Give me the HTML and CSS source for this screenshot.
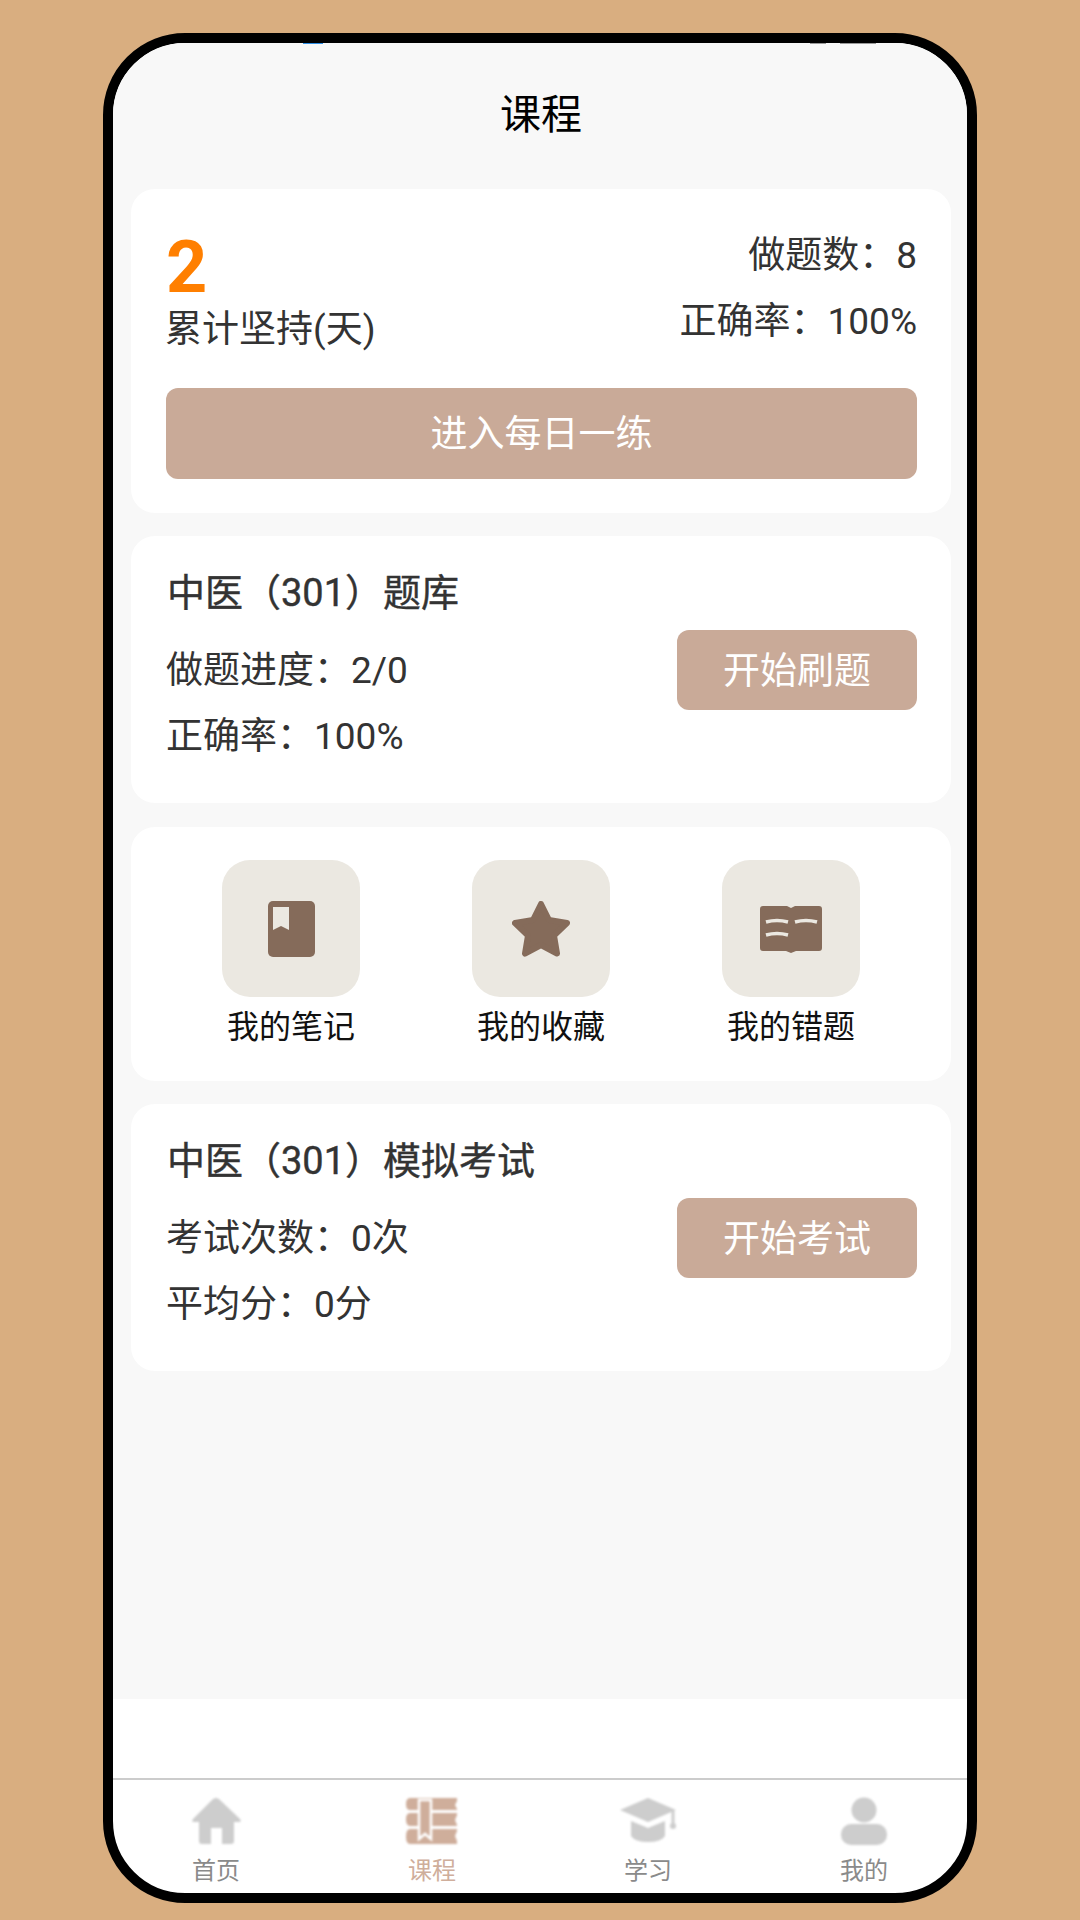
FILE: index.html
```html
<!DOCTYPE html>
<html lang="zh-CN">
<head>
  <meta charset="UTF-8" />
  <meta name="viewport" content="width=device-width, initial-scale=1" />
  <title>课程</title>
  <link rel="stylesheet" href="styles.css">
</head>
<body>

  <div class="phone">
    <span class="status-bit bit-blue"></span>
    <span class="status-bit bit-gray1"></span>
    <span class="status-bit bit-gray2"></span>

    <main class="content">
      <h1 class="page-title">课程</h1>

      <section class="card summary">
        <div class="summary-top">
          <div>
            <div class="days">2</div>
            <div class="days-label">累计坚持(天)</div>
          </div>
          <div class="summary-stats">
            <div class="line">做题数：8</div>
            <div class="line">正确率：100%</div>
          </div>
        </div>
        <button class="btn btn-wide">进入每日一练</button>
      </section>

      <section class="card bank">
        <h2 class="bank-title">中医（301）题库</h2>
        <div class="bank-row">
          <div class="bank-stats">
            <div class="line">做题进度：2/0</div>
            <div class="line">正确率：100%</div>
          </div>
          <button class="btn btn-small">开始刷题</button>
        </div>
      </section>

      <section class="card shortcuts">
        <div class="shortcut">
          <div class="shortcut-box">
            <svg class="shortcut-icon" width="47" height="56" viewBox="0 0 47 56">
              <rect width="47" height="56" rx="5" fill="#856b5a"/>
              <path d="M5 6h16v23l-8-4-8 4z" fill="#ebe8e1"/>
            </svg>
          </div>
          <div class="shortcut-label">我的笔记</div>
        </div>
        <div class="shortcut">
          <div class="shortcut-box">
            <svg class="shortcut-icon" width="60" height="56" viewBox="0 0 60 56">
              <path d="M30 3l8 16 18 3-13 12.500 3 18L30 44l-16 8.500 3-18L4 22l18-3z" fill="#856b5a" stroke="#856b5a" stroke-width="6" stroke-linejoin="round"/>
            </svg>
          </div>
          <div class="shortcut-label">我的收藏</div>
        </div>
        <div class="shortcut">
          <div class="shortcut-box">
            <svg class="shortcut-icon" width="62" height="48" viewBox="0 0 62 48">
              <path d="M3 1h24l4 2 4-2h24a3 3 0 0 1 3 3v39a3 3 0 0 1-3 3H36l-5 2-5-2H3a3 3 0 0 1-3-3V4a3 3 0 0 1 3-3z" fill="#856b5a"/>
              <path d="M6 17q11-3 22 0M35 17q11-3 22 0M6 30q11-3 22 0" fill="none" stroke="#ebe8e1" stroke-width="3.500"/>
            </svg>
          </div>
          <div class="shortcut-label">我的错题</div>
        </div>
      </section>

      <section class="card bank">
        <h2 class="bank-title">中医（301）模拟考试</h2>
        <div class="bank-row">
          <div class="bank-stats">
            <div class="line">考试次数：0次</div>
            <div class="line">平均分：0分</div>
          </div>
          <button class="btn btn-small">开始考试</button>
        </div>
      </section>
    </main>

    <div class="bottom-space"></div>

    <nav class="tabbar">
      <div class="tab">
        <svg class="tab-icon" width="60" height="48" viewBox="0 0 60 48">
          <path d="M30 1q2 0 4 2l20 19q2 3-1 3h-5v19q0 3-3 3h-9V31H25v16h-9q-3 0-3-3V25H8q-3 0-1-3L26 3q2-2 4-2z" fill="#cdcdcd"/>
        </svg>
        <span class="tab-label">首页</span>
      </div>
      <div class="tab tab-active">
        <svg class="tab-icon" width="60" height="48" viewBox="0 0 60 48">
          <path d="M8 1h47v3l-2 4 2 4v1H8q-4 0-4-6t4-6zM8 16h47v2l-2 5 2 5v1H8q-4 0-4-6.500t4-6.500zM8 32h47v2l-2 5 2 5v3H8q-4 0-4-7.500t4-7.500z" fill="#cfae9b"/>
          <path d="M17 3h12v39l-6-5-6 5z" fill="#cfae9b" stroke="#fff" stroke-width="2.500"/>
        </svg>
        <span class="tab-label">课程</span>
      </div>
      <div class="tab">
        <svg class="tab-icon" width="60" height="48" viewBox="0 0 60 48">
          <path d="M30 1l28 12-28 12L2 13z" fill="#cdcdcd"/>
          <path d="M13 24l17 7 17-7v15q-4 6-17 6t-17-6z" fill="#cdcdcd"/>
          <path d="M55 14v14" stroke="#cdcdcd" stroke-width="3"/>
          <circle cx="55" cy="29" r="3" fill="#cdcdcd"/>
        </svg>
        <span class="tab-label">学习</span>
      </div>
      <div class="tab">
        <svg class="tab-icon" width="60" height="48" viewBox="0 0 60 48">
          <circle cx="30" cy="13" r="12.500" fill="#cdcdcd"/>
          <rect x="7" y="27" width="46" height="21" rx="10" fill="#cdcdcd"/>
        </svg>
        <span class="tab-label">我的</span>
      </div>
    </nav>
  </div>

</body>
</html>
```

FILE: styles.css
```css
* {
  box-sizing: border-box;
}
body {
  margin: 0;
  height: 1920px;
  padding-top: 33px;
  background: #d9ae80;
  color: #333;
  font-family: Roboto, 'Noto Sans CJK SC', sans-serif;
  overflow: hidden;
}
.phone {
  position: relative;
  display: flex;
  flex-direction: column;
  width: 874px;
  height: 1870px;
  margin: 0 auto;
  border: 10px solid #000;
  border-radius: 82px;
  background: #fff;
  overflow: hidden;
}
.status-bit {
  position: absolute;
  top: 0;
  height: 1px;
}
.bit-blue {
  left: 190px;
  width: 20px;
  background: #2f8fe6;
}
.bit-gray1 {
  left: 697px;
  width: 16px;
  background: #999;
}
.bit-gray2 {
  left: 727px;
  width: 36px;
  background: #999;
}
.content {
  flex: 1;
  padding: 0 16px 0 18px;
  background: #f8f8f8;
}
.page-title {
  margin: 0;
  height: 146px;
  padding-top: 44px;
  font-size: 41px;
  font-weight: 400;
  line-height: 56px;
  text-align: center;
  color: #000;
}
.card {
  margin-bottom: 23px;
  background: #fff;
  border-radius: 24px;
}
.line {
  height: 66px;
  font-size: 37px;
  line-height: 66px;
}

/* top card */
.summary {
  padding: 34px 34px 34px 35px;
}
.summary-top {
  display: flex;
  justify-content: space-between;
}
.summary-stats {
  text-align: right;
}
.days {
  margin-top: 9px;
  font-size: 72px;
  font-weight: 700;
  line-height: 72px;
  color: #ff7f00;
}
.days-label {
  margin-left: -1px;
  font-size: 37px;
  line-height: 52px;
}
.btn {
  border: none;
  background: #c9aa98;
  color: #fff;
  font-family: inherit;
  font-size: 37px;
  border-radius: 12px;
}
.btn-wide {
  display: block;
  width: 100%;
  height: 91px;
  margin-top: 32px;
  padding-bottom: 7px;
}
.btn-small {
  width: 240px;
  height: 80px;
  padding-bottom: 5px;
}

/* question bank + mock exam */
.bank {
  height: 267px;
  padding: 31px 34px 0 36px;
}
.bank-title {
  margin: 0;
  font-size: 38px;
  font-weight: 400;
  line-height: 52px;
  -webkit-text-stroke: 0.4px #333;
}
.bank-row {
  display: flex;
  justify-content: space-between;
  align-items: flex-start;
  margin-top: 11px;
}
.bank-stats {
  margin-left: -1px;
  padding-top: 8px;
}

/* shortcuts */
.shortcuts {
  display: flex;
  justify-content: center;
  height: 254px;
  margin-top: 24px;
  padding-top: 33px;
}
.shortcut {
  width: 250px;
  text-align: center;
}
.shortcut-box {
  display: flex;
  align-items: center;
  justify-content: center;
  width: 138px;
  height: 137px;
  margin: 0 auto 8px;
  background: #ebe8e1;
  border-radius: 28px;
}
.shortcut-icon {
  filter: blur(0.7px);
}
.shortcut-label {
  font-size: 32px;
  line-height: 44px;
  color: #111;
}

/* bottom */
.bottom-space {
  height: 79px;
}
.tabbar {
  display: grid;
  grid-template-columns: repeat(4, 216px);
  flex: none;
  height: 115px;
  margin: 0 -5px;
  padding-top: 17px;
  border-top: 2px solid #ccc;
}
.tab {
  display: flex;
  flex-direction: column;
  align-items: center;
}
.tab-icon {
  filter: blur(1px);
}
.tab-label {
  margin-top: 11px;
  font-size: 24px;
  line-height: 30px;
  color: #8a8a8a;
}
.tab-active .tab-label {
  color: #cfae9b;
}
```
